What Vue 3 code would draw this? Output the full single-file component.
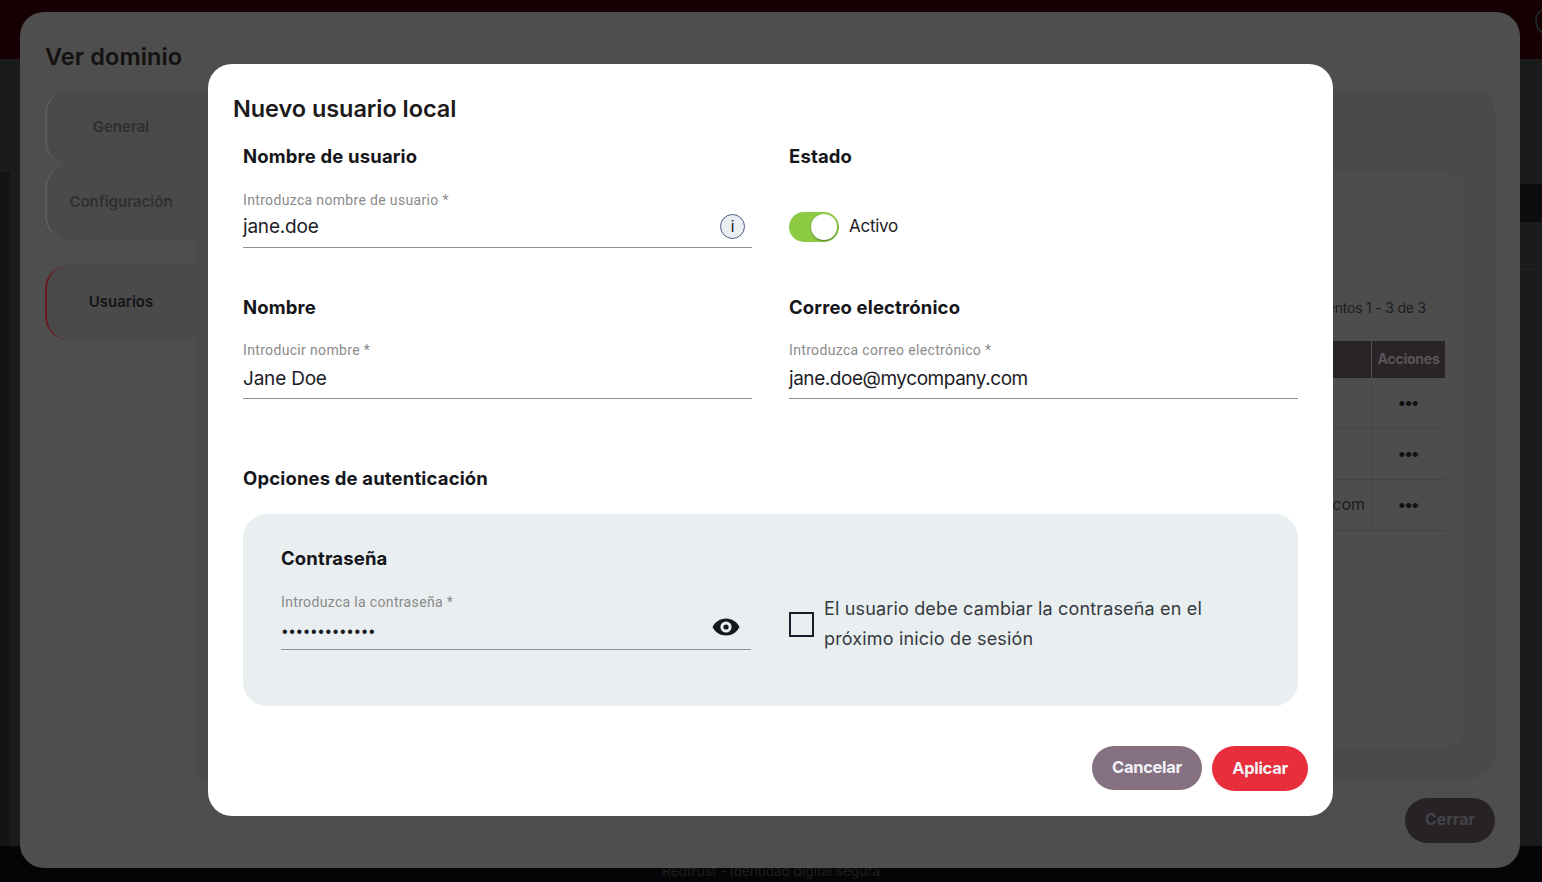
<script setup>
const rows = ['', '', 'jane.doe@mycompany.com']
const tabs = [
  { label: 'General' },
  { label: 'Configuración' },
  { label: 'Usuarios', active: true }
]
</script>

<template>
  <div class="page">
    <header class="topbar"><span class="avatar"></span></header>
    <div class="main">
      <div class="rail"></div>
      <div class="content">
        <div class="bg-head"></div>
        <div class="bg-row"></div>
      </div>
    </div>
    <footer class="footer">Redtrust - Identidad digital segura</footer>

    <section class="outer">
      <h2 class="outer-title">Ver dominio</h2>
      <div class="outer-body">
        <nav class="tabs">
          <div
            v-for="tab in tabs"
            :key="tab.label"
            class="tab"
            :class="{ active: tab.active }"
          >{{ tab.label }}</div>
        </nav>
        <div class="tab-panel">
          <div class="card">
            <div class="count">Elementos 1 - 3 de 3</div>
            <div class="table">
              <div class="t-head">
                <div class="t-main"></div>
                <div class="t-act">Acciones</div>
              </div>
              <div v-for="(r, i) in rows" :key="i" class="t-row">
                <div class="t-main">{{ r }}</div>
                <div class="t-act dots">•••</div>
              </div>
            </div>
          </div>
        </div>
      </div>
      <div class="outer-foot"><button class="btn-close">Cerrar</button></div>
    </section>

    <section class="modal">
      <h1 class="modal-title">Nuevo usuario local</h1>
      <div class="form">
        <div class="grid">
          <div class="col">
            <h3 class="sec">Nombre de usuario</h3>
            <div class="field">
              <label class="lab">Introduzca nombre de usuario *</label>
              <div class="val-row">
                <span class="val">jane.doe</span>
                <span class="info">i</span>
              </div>
            </div>
          </div>
          <div class="col">
            <h3 class="sec">Estado</h3>
            <div class="state">
              <span class="toggle"><span class="knob"></span></span>
              <span class="state-text">Activo</span>
            </div>
          </div>
          <div class="col">
            <h3 class="sec">Nombre</h3>
            <div class="field lower">
              <label class="lab">Introducir nombre *</label>
              <div class="val-row"><span class="val">Jane Doe</span></div>
            </div>
          </div>
          <div class="col">
            <h3 class="sec">Correo electrónico</h3>
            <div class="field lower">
              <label class="lab">Introduzca correo electrónico *</label>
              <div class="val-row"><span class="val mail">jane.doe@mycompany.com</span></div>
            </div>
          </div>
        </div>

        <h3 class="sec auth-title">Opciones de autenticación</h3>
        <div class="auth-box">
          <div class="pw">
            <h3 class="sec">Contraseña</h3>
            <div class="field">
              <label class="lab">Introduzca la contraseña *</label>
              <div class="val-row pw-row">
                <span class="pw-dots">•••••••••••••</span>
                <svg class="eye" viewBox="0 0 28 18" width="28" height="18" aria-hidden="true">
                  <path fill="#16181d" d="M14 0.5C8 0.5 3 4 0.5 9 3 14 8 17.5 14 17.5S25 14 27.5 9C25 4 20 0.5 14 0.5Z"/>
                  <circle cx="14" cy="9" r="5.6" fill="#e9eef0"/>
                  <circle cx="14" cy="9" r="2.6" fill="#16181d"/>
                </svg>
              </div>
            </div>
          </div>
          <div class="check">
            <span class="box"></span>
            <span class="check-text">El usuario debe cambiar la contraseña en el próximo inicio de sesión</span>
          </div>
        </div>
      </div>
      <div class="actions">
        <button class="btn cancel">Cancelar</button>
        <button class="btn apply">Aplicar</button>
      </div>
    </section>
  </div>
</template>

<style>
html, body { margin: 0; background: #171818; }
</style>

<style scoped>
* { box-sizing: border-box; }
.page {
  position: relative;
  width: 1542px;
  height: 882px;
  overflow: hidden;
  display: flex;
  flex-direction: column;
  background: #171818;
  font-family: Inter, "Noto Sans", sans-serif;
  color: #1b1b1f;
}
.topbar { height: 59px; background: #150004; position: relative; flex: none; }
.avatar {
  position: absolute; left: 1535px; top: 6px; width: 30px; height: 30px;
  border: 2px solid #1d2326; border-radius: 50%;
}
.main { flex: 1; display: flex; background: #1a1b1b; }
.rail { width: 10px; margin-top: 113px; background: #131414; }
.content { flex: 1; padding-top: 125px; }
.bg-head { height: 38px; margin-left: 1400px; background: #0d0d0d; }
.bg-row { height: 48px; margin-left: 1400px; border-bottom: 1px solid #222; }
.footer {
  height: 36px; flex: none; background: #050507; color: #1d1d1e;
  font-size: 14px; text-align: center; padding-top: 16px; letter-spacing: -0.2px;
  line-height: 18px;
}

.outer {
  position: absolute; left: 20px; top: 12px; width: 1500px; height: 856px;
  background: #4e4e4e; border-radius: 24px; padding: 30px 25px 0;
}
.outer-title { margin: 0; font-size: 23.5px; line-height: 30px; font-weight: 600; color: #15110f; letter-spacing: 0.1px; }
.outer-body { display: flex; margin-top: 18px; height: 688px; }
.tabs { width: 150px; flex: none; display: flex; flex-direction: column; }
.tab {
  height: 75px; flex: none; display: flex; align-items: center; justify-content: center;
  padding-bottom: 2px;
  border-left: 2px solid #5e5a5c; border-radius: 24px 0 0 24px;
  background: #4a4a4a; font-size: 15px; font-weight: 600; color: #302f2f;
}
.tab:nth-child(3) { margin-top: 25px; border-left-color: #6a1820; color: #141416; }
.tab-panel {
  flex: 1; background: #4a4a4a; border-radius: 0 24px 24px 0; padding: 82px 30px 30px 0;
  display: flex; justify-content: flex-end;
}
.card {
  width: 700px; height: 576px; background: #4d4d4d; border-radius: 24px;
  padding: 128px 20px 0 0; display: flex; flex-direction: column; align-items: flex-end;
}
.count { font-size: 14px; line-height: 16px; color: #1d1d1e; padding-right: 19px; letter-spacing: -0.2px; }
.table { width: 600px; margin-top: 25px; }
.t-head, .t-row { display: flex; }
.t-main { flex: 1; }
.t-act { width: 74px; flex: none; text-align: center; }
.t-head { height: 37px; background: #2a2428; }
.t-head .t-act {
  border-left: 1px solid #55525a; font-size: 14px; line-height: 36px; font-weight: 700;
  color: #585558; letter-spacing: -0.22px;
}
.t-row { height: 51px; border-bottom: 1px solid #434343; }
.t-row .t-main { text-align: right; padding: 14px 6px 0 0; font-size: 16px; line-height: 20px; color: #1d1d1e; }
.t-row .t-act { border-left: 1px solid #474747; }
.dots { font-family: "Liberation Sans", sans-serif; font-size: 19px; line-height: 51px; color: #111; }
.outer-foot { display: flex; justify-content: flex-end; margin-top: 20px; }
.btn-close {
  width: 90px; height: 45px; border: 0; border-radius: 23px; background: #272226;
  color: #444448; font: 700 16px Inter, sans-serif; padding: 0 0 4px;
}

.modal {
  position: absolute; left: 208px; top: 64px; width: 1125px; height: 752px;
  background: #fff; border-radius: 24px; padding-top: 30px;
}
.modal-title {
  margin: 0 0 20px 25px; font-size: 23.5px; line-height: 30px; font-weight: 600; color: #1d1a1b; letter-spacing: -0.06px;
}
.form { padding: 0 35px; }
.grid { display: grid; grid-template-columns: 509px 509px; column-gap: 37px; row-gap: 47px; }
.sec { margin: 0; font-size: 18.5px; line-height: 24px; font-weight: 700; color: #15161a; letter-spacing: 0.15px; }
.field { margin-top: 23px; }
.lab {
  display: block; font-family: Roboto, sans-serif; font-size: 14px; line-height: 16px; color: #8a8a8a;
  letter-spacing: 0.34px; padding-top: 1px; margin-bottom: -1px;
}
.val-row {
  display: flex; align-items: center; justify-content: space-between;
  height: 41px; padding-top: 4px; padding-bottom: 5px; border-bottom: 1px solid #8f8f8f;
}
.lower .lab { padding-top: 0; margin-bottom: 0; }
.lower .val-row { height: 41px; padding-top: 6px; }
.val { font-size: 19px; line-height: 30px; color: #1d2026; letter-spacing: -0.2px; }
.val.mail { letter-spacing: -0.45px; }
.info {
  width: 25px; height: 25px; margin-right: 7px; margin-top: -1px; border-radius: 50%;
  border: 1px solid #4f5b85; background: #e9eef0; text-align: center;
  font-size: 15px; line-height: 23px; color: #111;
}
.state { display: flex; align-items: center; gap: 10px; margin-top: 44px; }
.toggle {
  width: 50px; height: 30px; border-radius: 15px; background: #8ecb45; position: relative; display: block;
}
.knob {
  position: absolute; right: 2px; top: 2px; width: 26px; height: 26px; border-radius: 50%;
  background: #fff; box-shadow: 0 1px 2px rgba(0,0,0,.4);
}
.state-text { font-size: 17px; line-height: 30px; color: #1d2026; letter-spacing: -0.28px; margin-top: -3px; }
.auth-title { margin-top: 67px; }
.auth-box {
  margin-top: 24px; height: 192px; border-radius: 24px; background: #e9eef0;
  padding: 32px 0 0 38px; display: grid; grid-template-columns: 470px 1fr; column-gap: 38px;
}
.pw-row { height: 41px; }
.pw-dots { font-family: "Liberation Sans", sans-serif; font-size: 16px; line-height: 30px; letter-spacing: 1.65px; color: #16181d; margin-top: 6px; margin-left: 1px; }
.eye { margin-right: 11px; margin-top: -3px; }
.check { display: flex; align-items: center; gap: 10px; height: 80px; margin-top: 38px; }
.box { width: 25px; height: 25px; flex: none; border: 2px solid #1a1c2c; }
.check-text { width: 400px; font-size: 18px; line-height: 30px; color: #363a40; letter-spacing: 0.16px; }
.actions { display: flex; justify-content: flex-end; align-items: flex-start; gap: 10px; margin-top: 40px; padding-right: 25px; }
.btn { border: 0; color: #f1f3f6; font: 700 16.5px Inter, sans-serif; letter-spacing: -0.3px; }
.cancel { width: 110px; height: 44px; border-radius: 22px; background: #857182; padding: 0 0 2px; }
.apply { width: 96px; height: 45px; border-radius: 23px; background: #e82e3c; padding: 0 0 2px; }
</style>
